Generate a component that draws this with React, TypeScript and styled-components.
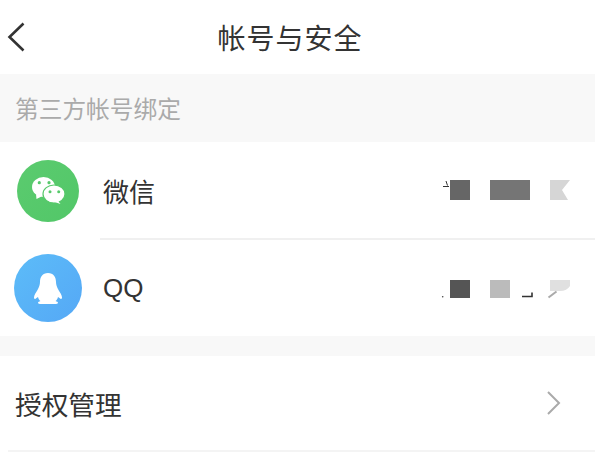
import React from 'react'
import styled, { createGlobalStyle } from 'styled-components'

const GlobalStyle = createGlobalStyle`
  html, body {
    margin: 0;
    padding: 0;
    background: #fff;
  }
  body {
    font-family: "Liberation Sans", "Noto Sans CJK SC", sans-serif;
  }
`

const Page = styled.div`
  width: 595px;
  height: 452px;
  overflow: hidden;
  background: #fff;
`

const Header = styled.div`
  height: 74px;
  display: flex;
  align-items: center;
  justify-content: center;
  padding-right: 15px;
  box-sizing: border-box;
  position: relative;
`

const BackButton = styled.div`
  position: absolute;
  left: 6px;
  top: 22px;
  width: 20px;
  height: 32px;
  color: #333;
`

const Title = styled.div`
  font-size: 28px;
  letter-spacing: 1px;
  color: #333;
`

const SectionLabel = styled.div`
  height: 68px;
  padding-left: 15px;
  display: flex;
  align-items: center;
  background: #f8f8f8;
  font-size: 23.7px;
  color: #aaa;
`

const Spacer = styled.div`
  height: 20px;
  background: #f8f8f8;
`

const AccountRow = styled.div`
  height: 96px;
  display: flex;
  align-items: center;
`

const IconSlot = styled.div<{ $top: number }>`
  width: 103px;
  flex: none;
  display: flex;
  justify-content: center;
  padding-right: 7px;
  padding-top: ${({ $top }) => $top}px;
  box-sizing: border-box;
`

const Avatar = styled.div<{ $size: number; $from: string; $to: string }>`
  width: ${({ $size }) => $size}px;
  height: ${({ $size }) => $size}px;
  border-radius: 50%;
  background: linear-gradient(135deg, ${({ $from }) => $from}, ${({ $to }) => $to});
  display: flex;
  align-items: center;
  justify-content: center;
`

const RowLabel = styled.div`
  font-size: 26px;
  color: #333;
`

const Divider = styled.div<{ $inset: number; $color: string }>`
  height: 2px;
  margin-left: ${({ $inset }) => $inset}px;
  background: ${({ $color }) => $color};
`

const Masked = styled.svg`
  margin-left: auto;
  margin-right: 25px;
  flex: none;
`

const MenuRow = styled.div`
  height: 94px;
  display: flex;
  align-items: center;
  justify-content: space-between;
  padding: 0 33px 0 15px;
  font-size: 26.7px;
  color: #333;
`

const WeChatIcon = () => (
  <svg width="33" height="27" viewBox="0 0 33 27" fill="#fff">
    <ellipse cx="11.500" cy="10" rx="11.500" ry="10" />
    <path d="M4 17l.5 5 6-3z" />
    <ellipse cx="22" cy="17" rx="11" ry="9" stroke="#57c96b" strokeWidth="1.200" />
    <path d="M26 24l2.500 3-6-2z" />
    <circle cx="7.300" cy="5.700" r="1.600" fill="#57c96b" />
    <circle cx="17" cy="5.700" r="1.600" fill="#57c96b" />
    <circle cx="18" cy="14.700" r="1.500" fill="#57c96b" />
    <circle cx="26.700" cy="14.700" r="1.500" fill="#57c96b" />
  </svg>
)

const QQIcon = () => (
  <svg width="28" height="31" viewBox="0 0 28 31" fill="#fff">
    <path d="M14 0C19.500 0 22 4 22 9C22 12 23 14 24.500 17C26 19.500 28 22 28 24.500C28 26 27 26.500 25.500 25L24 24C23.500 26 22.500 27.500 21.500 28C23 28.500 24 29 24 30C24 31 21 31 18 31L10 31C7 31 4 31 4 30C4 29 5 28.500 6.500 28C5.500 27.500 4.500 26 4 24L2.500 25C1 26.500 0 26 0 24.500C0 22 2 19.500 3.500 17C5 14 6 12 6 9C6 4 8.500 0 14 0Z" />
  </svg>
)

export default function App() {
  return (
    <Page>
      <GlobalStyle />
      <Header>
        <BackButton>
          <svg width="20" height="32" viewBox="0 0 20 32" fill="none" stroke="currentColor" strokeWidth="2.600">
            <path d="M17.500 1.500L3.500 15L17.500 28.500" />
          </svg>
        </BackButton>
        <Title>帐号与安全</Title>
      </Header>
      <SectionLabel>第三方帐号绑定</SectionLabel>
      <AccountRow>
        <IconSlot $top={1}>
          <Avatar $size={62} $from="#5bcb6f" $to="#52c768">
            <WeChatIcon />
          </Avatar>
        </IconSlot>
        <RowLabel>微信</RowLabel>
        <Masked width="130" height="20" viewBox="0 0 130 20">
          <path d="M3 6.500h6M6 1l1.500 4.500" stroke="#333" strokeWidth="1" fill="none" />
          <rect x="10" width="20" height="20" fill="#666" />
          <rect x="50" width="40" height="20" fill="#757575" />
          <path d="M110 0h20l-8 10 6 10h-18z" fill="#d6d6d6" />
        </Masked>
      </AccountRow>
      <Divider $inset={100} $color="#f0f0f0" />
      <AccountRow>
        <IconSlot $top={0}>
          <Avatar $size={68} $from="#5cbcf8" $to="#55a8f6">
            <QQIcon />
          </Avatar>
        </IconSlot>
        <RowLabel>QQ</RowLabel>
        <Masked width="130" height="24" viewBox="0 0 130 24">
          <circle cx="2.700" cy="20.700" r="0.800" fill="#444" />
          <rect x="10" y="4" width="20" height="18" fill="#555" />
          <rect x="50" y="4" width="20" height="18" fill="#bbb" />
          <path d="M82 20.500h10v-4" stroke="#333" strokeWidth="1.600" fill="none" />
          <path d="M110 4h20v6q-3 5-10 5h-10z" fill="#e0e0e0" />
          <path d="M108.500 21.500l8-6" stroke="#aaa" strokeWidth="2" fill="none" />
        </Masked>
      </AccountRow>
      <Spacer />
      <MenuRow>
        授权管理
        <svg width="16" height="26" viewBox="0 0 16 26" fill="none" stroke="#aaa" strokeWidth="2">
          <path d="M2 2l11 11L2 24" />
        </svg>
      </MenuRow>
      <Divider $inset={8} $color="#f4f4f4" />
    </Page>
  )
}
